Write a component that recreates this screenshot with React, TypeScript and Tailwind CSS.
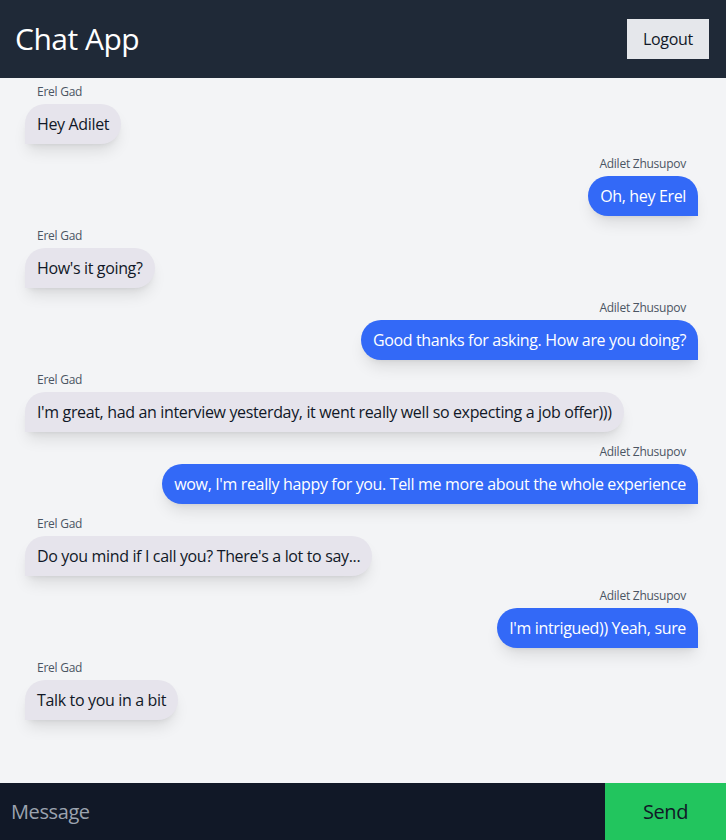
import React from "react";

type Msg = { me: boolean; text: string };

const messages: Msg[] = [
  { me: false, text: "Hey Adilet" },
  { me: true, text: "Oh, hey Erel" },
  { me: false, text: "How's it going?" },
  { me: true, text: "Good thanks for asking. How are you doing?" },
  { me: false, text: "I'm great, had an interview yesterday, it went really well so expecting a job offer)))" },
  { me: true, text: "wow, I'm really happy for you. Tell me more about the whole experience" },
  { me: false, text: "Do you mind if I call you? There's a lot to say..." },
  { me: true, text: "I'm intrigued)) Yeah, sure" },
  { me: false, text: "Talk to you in a bit" },
];

export default function App() {
  return (
    <div
      className="h-screen w-full flex flex-col bg-[#f3f4f6]"
      style={{ fontFamily: '"Open Sans", "Noto Sans", sans-serif' }}
    >
      <header className="h-[78px] shrink-0 bg-[#1f2937] flex items-center justify-between pl-[15px] pr-[17px]">
        <h1 className="text-[30px] text-white leading-none tracking-[-0.5px]">Chat App</h1>
        <button className="h-10 w-[82px] bg-[#e5e7eb] text-[#111827] text-base tracking-[-0.3px]">Logout</button>
      </header>
      <main className="flex-1 flex flex-col gap-3 pt-[6px] pl-[25px] pr-[28px] overflow-hidden">
        {messages.map((m, i) => (
          <div key={i} className={m.me ? "flex flex-col items-end" : "flex flex-col items-start"}>
            <div className="text-xs leading-4 text-[#4b5563] px-3 mb-1 tracking-[-0.25px]">
              {m.me ? "Adilet Zhusupov" : "Erel Gad"}
            </div>
            <div
              className={
                m.me
                  ? "px-3 py-2 leading-6 text-base tracking-[-0.35px] text-white bg-[#3369f7] rounded-[20px] rounded-br-none shadow-lg"
                  : "px-3 py-2 leading-6 text-base tracking-[-0.35px] text-[#111827] bg-[#e6e4ec] rounded-[20px] rounded-bl-none shadow-lg"
              }
            >
              {m.text}
            </div>
          </div>
        ))}
      </main>
      <footer className="h-[57px] shrink-0 flex bg-[#111827]">
        <input
          className="flex-1 bg-transparent outline-none px-[11px] text-xl text-white tracking-[-0.4px] placeholder:text-[#9ca3af]"
          placeholder="Message"
        />
        <button className="w-[121px] bg-[#22c55e] text-xl text-[#111827] tracking-[-0.4px]">Send</button>
      </footer>
    </div>
  );
}
